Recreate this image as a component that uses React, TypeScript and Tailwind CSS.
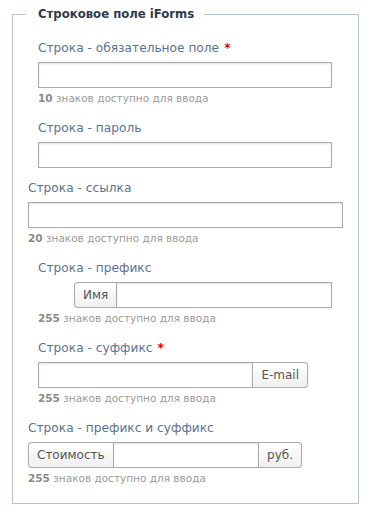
import React from "react";

const font = { fontFamily: '"DejaVu Sans", Verdana, sans-serif' };

function Label({ text, required, indent }: { text: string; required?: boolean; indent?: boolean }) {
  return (
    <div className={`text-[12.2px] leading-[16px] text-[#5b7290] ${indent ? "ml-[10px]" : ""}`}>
      {text}
      {required && <span className="ml-[5px] font-bold text-[#e00000]">*</span>}
    </div>
  );
}

function Hint({ count, indent }: { count: number; indent?: boolean }) {
  return (
    <div className={`mt-[3px] text-[10.5px] leading-[14px] text-[#9a9a9a] ${indent ? "ml-[10px]" : ""}`}>
      <b className="text-[#8a8a8a]">{count}</b> знаков доступно для ввода
    </div>
  );
}

const inputCls =
  "block h-[26px] border border-[#aaaaaa] bg-white shadow-[inset_0_1px_2px_rgba(0,0,0,0.12)] outline-none";
const addonCls =
  "flex h-[26px] items-center border border-[#aaaaaa] bg-gradient-to-b from-white to-[#f0f0f0] text-[12px] text-[#555555]";

export default function App() {
  return (
    <div className="h-[517px] w-[366px] bg-white pt-[6px]" style={font}>
      <fieldset className="ml-[12px] w-[341px] border border-[#b3c4cd] px-[15px] pb-[18px] pt-[18px]">
        <legend className="-ml-[2px] pl-[12px] pr-[10px] text-[11.7px] font-bold leading-[16px] text-[#2d3b4b]">
          Строковое поле iForms
        </legend>

        <Label text="Строка - обязательное поле" required indent />
        <input className={`${inputCls} ml-[10px] mt-[6px] w-[294px]`} />
        <Hint count={10} indent />

        <div className="mt-[15px]">
          <Label text="Строка - пароль" indent />
          <input type="password" className={`${inputCls} ml-[10px] mt-[6px] w-[294px]`} />
        </div>

        <div className="mt-[12px]">
          <Label text="Строка - ссылка" />
          <input className={`${inputCls} mt-[6px] w-[315px]`} />
          <Hint count={20} />
        </div>

        <div className="mt-[15px]">
          <Label text="Строка - префикс" indent />
          <div className="ml-[46px] mt-[6px] flex w-[258px]">
            <span className={`${addonCls} rounded-l-[4px] border-r-0 px-[8px]`}>Имя</span>
            <input className={`${inputCls} min-w-0 flex-1`} />
          </div>
          <Hint count={255} indent />
        </div>

        <div className="mt-[15px]">
          <Label text="Строка - суффикс" required indent />
          <div className="ml-[10px] mt-[6px] flex w-[270px]">
            <input className={`${inputCls} min-w-0 flex-1`} />
            <span className={`${addonCls} rounded-r-[4px] border-l-0 px-[8px]`}>E-mail</span>
          </div>
          <Hint count={255} indent />
        </div>

        <div className="mt-[15px]">
          <Label text="Строка - префикс и суффикс" />
          <div className="mt-[6px] flex w-[274px]">
            <span className={`${addonCls} rounded-l-[4px] border-r-0 px-[8px]`}>Стоимость</span>
            <input className={`${inputCls} min-w-0 flex-1`} />
            <span className={`${addonCls} rounded-r-[4px] border-l-0 px-[8px]`}>руб.</span>
          </div>
          <Hint count={255} />
        </div>
      </fieldset>
    </div>
  );
}
